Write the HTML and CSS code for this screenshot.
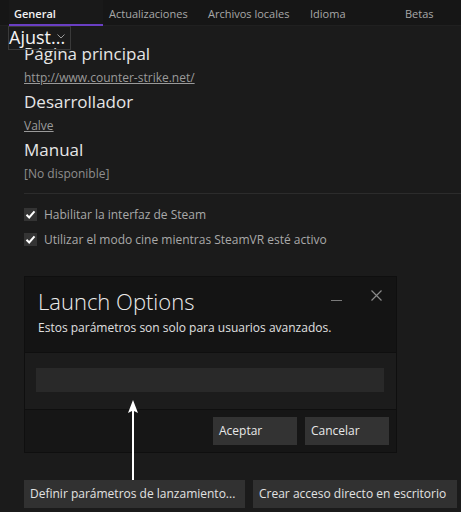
FILE: index.html
```html
<!DOCTYPE html>
<html lang="es">
<head>
<meta charset="utf-8">
<link rel="stylesheet" href="styles.css">
</head>
<body>
<div class="page">
  <nav class="tabs">
    <div class="tab active">General</div>
    <div class="tab t2">Actualizaciones</div>
    <div class="tab t3">Archivos locales</div>
    <div class="tab t4">Idioma</div>
    <div class="tab t5">Betas</div>
  </nav>
  <div class="ajust">Ajust...<svg class="chev" width="8" height="5" viewBox="0 0 8 5"><path d="M0.5 0.5 L4 4 L7.5 0.5" fill="none" stroke="#9a9a9a" stroke-width="1"/></svg></div>

  <section class="info">
    <div class="h">Página principal</div>
    <a class="lnk">http://www.counter-strike.net/</a>
    <div class="h">Desarrollador</div>
    <a class="lnk">Valve</a>
    <div class="h">Manual</div>
    <div class="muted">[No disponible]</div>
  </section>
  <div class="divider"></div>

  <section class="checks">
    <label class="chk"><span class="box"><svg width="11" height="11" viewBox="0 0 11 11"><path d="M1.5 5.8 L4.2 8.5 L9.5 2.3" fill="none" stroke="#fff" stroke-width="2"/></svg></span>Habilitar la interfaz de Steam</label>
    <label class="chk"><span class="box"><svg width="11" height="11" viewBox="0 0 11 11"><path d="M1.5 5.8 L4.2 8.5 L9.5 2.3" fill="none" stroke="#fff" stroke-width="2"/></svg></span>Utilizar el modo cine mientras SteamVR esté activo</label>
  </section>

  <div class="dialog">
    <div class="dlg-head">
      <div class="dlg-title">Launch Options</div>
      <div class="dlg-sub">Estos parámetros son solo para usuarios avanzados.</div>
      <div class="ctrl min"></div>
      <svg class="ctrl close" width="11" height="11" viewBox="0 0 11 11"><path d="M0.5 0.5 L10.5 10.5 M10.5 0.5 L0.5 10.5" stroke="#8a8a8a" stroke-width="1.2"/></svg>
    </div>
    <div class="dlg-body"><div class="input"></div></div>
    <div class="dlg-foot">
      <div class="btn">Aceptar</div>
      <div class="btn">Cancelar</div>
    </div>
  </div>

  <div class="arrow"><svg width="12" height="80" viewBox="0 0 12 80"><path d="M6 0 L11 13 L7 11 L7 80 L5 80 L5 11 L1 13 Z" fill="#fff"/></svg></div>

  <div class="actions">
    <div class="abtn">Definir parámetros de lanzamiento...</div>
    <div class="abtn">Crear acceso directo en escritorio</div>
  </div>
</div>
</body>
</html>
```

FILE: styles.css
```css
* { box-sizing: border-box; }
html, body { margin: 0; padding: 0; }
body {
  background: #1b1b1b;
  font-family: "Segoe UI", "Open Sans", "Noto Sans", sans-serif;
  color: #dcdcdc;
  width: 461px;
  height: 512px;
  overflow: hidden;
}
.page { position: relative; width: 461px; height: 512px; }

.tabs {
  display: flex;
  height: 26px;
  background: #161616;
  border-bottom: 1px solid #202020;
  font-size: 11px;
  color: #a8a8a8;
}
.tab { height: 26px; padding-top: 2px; line-height: 24px; }
.tab.active {
  margin-left: 9px;
  width: 94px;
  padding-left: 5px;
  color: #f2f2f2;
  font-weight: 600;
  background: #191919;
  border-bottom: 2px solid #6a3fc3;
}
.t2 { margin-left: 6px; width: 99px; }
.t3 { width: 102px; }
.t4 { width: 95px; }

.ajust {
  position: absolute;
  left: 8px;
  top: 26px;
  width: 63px;
  height: 24px;
  border: 1px solid #3a3a3a;
  font-size: 18px;
  line-height: 21px;
  color: #f4f4f4;
  white-space: nowrap;
}
.chev { position: absolute; left: 48px; top: 7px; }

.info { padding: 16px 0 0 24px; display: flex; flex-direction: column; align-items: flex-start; }
.h { font-size: 17px; line-height: 24px; color: #e6e6e6; }
.lnk { font-size: 12px; line-height: 24px; color: #9a9a9a; text-decoration: underline; }
.muted { font-size: 12px; line-height: 24px; color: #8e8e8e; }

.divider { margin: 7px 0 0 24px; height: 1px; background: #2c2c2c; }

.checks { margin-top: 8px; padding-left: 24px; display: flex; flex-direction: column; }
.chk { display: flex; align-items: center; height: 25px; font-size: 12px; color: #a9a9a9; }
.box {
  width: 13px; height: 13px; background: #343434; margin-right: 7px;
  display: flex; align-items: center; justify-content: center;
}

.dialog {
  margin: 24px 0 0 24px;
  width: 373px;
  border: 1px solid #0f0f0f;
  background: #141414;
}
.dlg-head { position: relative; height: 75px; padding: 9px 0 0 13px; background: #141414; }
.dlg-title { font-size: 22px; font-weight: 300; color: #ececec; line-height: 30px; }
.dlg-sub { font-size: 12px; color: #e0e0e0; line-height: 16px; margin-top: 4px; }
.ctrl { position: absolute; }
.min { left: 306px; top: 23px; width: 11px; height: 1px; background: #7a7a7a; }
.close { left: 346px; top: 13px; }

.dlg-body {
  height: 58px;
  background: #1c1c1c;
  border-top: 1px solid #0f0f0f;
  border-bottom: 1px solid #0f0f0f;
  padding: 15px 12px 0 11px;
}
.input { height: 24px; background: #292929; }

.dlg-foot {
  height: 42px;
  background: #161616;
  display: flex;
  justify-content: flex-end;
  gap: 8px;
  padding: 7px 7px 0 0;
}
.btn {
  width: 84px; height: 28px; background: #333;
  font-size: 12px; line-height: 28px; color: #e8e8e8; padding-left: 6px;
}

.arrow { position: absolute; left: 127px; top: 400px; width: 12px; height: 80px; }
.arrow svg { display: block; }

.actions { margin: 27px 0 0 24px; display: flex; gap: 8px; }
.abtn {
  height: 28px; background: #313131; font-size: 12px; line-height: 28px;
  color: #e2e2e2; padding: 0 6px; white-space: nowrap;
}
.abtn:first-child { width: 221px; }
.abtn:last-child { width: 204px; }
```
